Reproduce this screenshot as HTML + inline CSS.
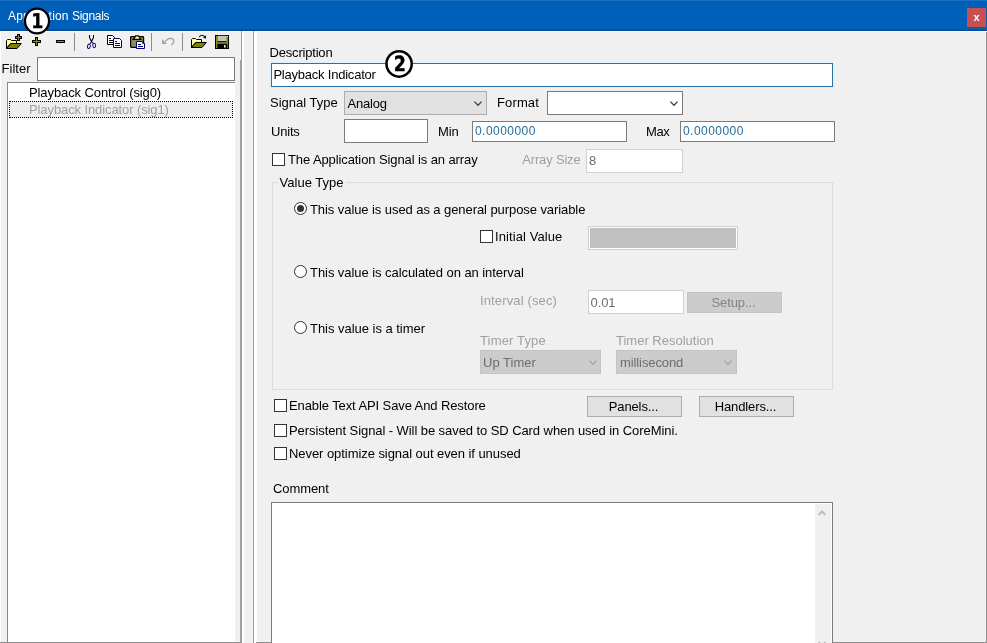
<!DOCTYPE html>
<html>
<head>
<meta charset="utf-8">
<title>Application Signals</title>
<style>
*{box-sizing:border-box;margin:0;padding:0}
html,body{width:987px;height:643px;overflow:hidden;background:#f0f0f0}
body{position:relative;will-change:transform;font-family:"Liberation Sans",sans-serif;font-size:13px;color:#000;line-height:16px}
.a{position:absolute;white-space:nowrap}
.t{position:absolute;white-space:nowrap;height:18px;line-height:18px;letter-spacing:-0.1px}
.g{color:#a0a0a0}
.inp{position:absolute;background:#fff;border:1px solid #7a7a7a}
.cb{position:absolute;width:13px;height:13px;background:#fff;border:1px solid #333}
.rd{position:absolute;width:13px;height:13px;border-radius:50%;background:#fff;border:1.3px solid #333}
.btn{position:absolute;background:#e1e1e1;border:1px solid #adadad;text-align:center;line-height:20px;height:20px;letter-spacing:-0.12px;padding-right:2px}
.sep{position:absolute;width:1px;background:#8c8c8c;top:33px;height:18px}
svg{position:absolute;overflow:visible}
</style>
</head>
<body>
<!-- title bar -->
<div class="a" id="titlebar" style="left:0;top:0;width:987px;height:31px;background:#005fb8;border-top:1px solid #1a6fc0;border-bottom:1px solid #004a91;box-shadow:inset 0 -1px 0 #0056a8"></div>
<div class="a" style="left:0;top:31px;width:987px;height:1px;background:#f4ffff"></div>
<div class="a" id="title" style="left:8px;top:8px;color:#fff;font-size:12px;line-height:16px"><span style="letter-spacing:0.18px">Application</span> <span style="letter-spacing:-0.3px">Signals</span></div>
<div class="a" id="close" style="left:967px;top:8px;width:19px;height:19px;background:#c75050;color:#fff;font-weight:bold;font-size:11px;line-height:18px;text-align:center">x</div>

<!-- panel edges -->
<div class="a" style="left:0;top:32px;width:1px;height:611px;background:#fff"></div>
<div class="a" style="left:240px;top:60px;width:1px;height:583px;background:#a0a0a0"></div>
<div class="a" style="left:241px;top:31px;width:1px;height:612px;background:#a0a0a0"></div>
<div class="a" style="left:242px;top:32px;width:2px;height:611px;background:#fff"></div>
<div class="a" style="left:253px;top:31px;width:1px;height:612px;background:#a0a0a0"></div>
<div class="a" style="left:254px;top:32px;width:3px;height:611px;background:#fff"></div>
<div class="a" style="left:986px;top:32px;width:1px;height:611px;background:#909090"></div>
<div class="a" style="left:0;top:642px;width:242px;height:1px;background:#909090"></div>
<div class="a" style="left:256px;top:642px;width:731px;height:1px;background:#909090"></div>

<!-- toolbar -->

<!-- new-folder icon -->
<svg style="left:6px;top:34px" width="17" height="16" viewBox="0 0 17 16">
 <path d="M0.5 14.5 L0.5 6.5 L1.5 5.5 L4.5 5.5 L5.5 6.5 L10.5 6.5 L10.5 9.5 L4.5 9.5 Z" fill="#ffff99" stroke="#000" stroke-width="1"/>
 <path d="M0.5 14.5 L4.7 9.5 L15.3 9.5 L11 14.5 Z" fill="#808000" stroke="#000" stroke-width="1"/>
 <path d="M11 0 h3 v2 h2 v3 h-2 v2 h-3 v-2 h-2 v-3 h2 z" fill="#000"/>
 <path d="M12 1 h1 v2 h2 v1 h-2 v2 h-1 v-2 h-2 v-1 h2 z" fill="#8a7a20"/>
</svg>
<!-- plus -->
<svg style="left:32px;top:37px" width="9" height="9" viewBox="0 0 9 9">
 <path d="M3 0 h3 v3 h3 v3 h-3 v3 h-3 v-3 h-3 v-3 h3 z" fill="#000"/>
 <path d="M4 1 h1 v3 h3 v1 h-3 v3 h-1 v-3 h-3 v-1 h3 z" fill="#8c8c2a"/>
</svg>
<!-- minus -->
<svg style="left:56px;top:40px" width="9" height="3" viewBox="0 0 9 3">
 <rect x="0" y="0" width="9" height="3" fill="#000"/>
 <rect x="1" y="1" width="7" height="1" fill="#8c8c4a"/>
</svg>
<!-- cut -->
<svg style="left:87px;top:35px" width="10" height="14" viewBox="0 0 10 14">
 <path d="M2.5 0 L2.5 2.6 L4.5 6.6 L6.5 2.6 L6.5 0" fill="none" stroke="#000" stroke-width="1.05"/>
 <path d="M4.5 6.6 L2.9 9 M4.5 6.6 L6.2 8.4" fill="none" stroke="#101060" stroke-width="1.05"/>
 <ellipse cx="1.9" cy="11.3" rx="1.35" ry="2.25" transform="rotate(14 1.9 11.3)" fill="#fbfbfb" stroke="#000070" stroke-width="1"/>
 <ellipse cx="7.2" cy="10.5" rx="1.45" ry="2.15" transform="rotate(-10 7.2 10.5)" fill="#fbfbfb" stroke="#000070" stroke-width="1"/>
</svg>
<!-- copy -->
<svg style="left:107px;top:35px" width="16" height="14" viewBox="0 0 16 14">
 <path d="M0.5 0.5 L5.5 0.5 L7.5 2.5 L7.5 9.5 L0.5 9.5 Z" fill="#fff" stroke="#000" stroke-width="1"/>
 <path d="M2 3.5 H4 M2 5.5 H6 M2 7.5 H6" stroke="#000" stroke-width="1"/>
 <path d="M6.5 3.5 L12.5 3.5 L14.5 5.5 L14.5 12.5 L6.5 12.5 Z" fill="#fff" stroke="#000080" stroke-width="1"/>
 <path d="M8 6.5 H10 M8 8.5 H13 M8 10.5 H13" stroke="#000080" stroke-width="1"/>
</svg>
<!-- paste -->
<svg style="left:130px;top:35px" width="16" height="14" viewBox="0 0 16 14">
 <rect x="0.6" y="1.6" width="13" height="10.8" rx="0.8" fill="#8c8c58" stroke="#000" stroke-width="1.2"/>
 <path d="M3.2 4.4 L4.6 2.9 L5.5 0.9 L8.7 0.9 L9.6 2.9 L11 4.4 Z" fill="#ffffc8" stroke="#000" stroke-width="1.1"/>
 <path d="M6.5 6.5 L12.5 6.5 L14.5 8.5 L14.5 13.5 L6.5 13.5 Z" fill="#fff" stroke="#000080" stroke-width="1"/>
 <path d="M12.5 6.5 L12.5 8.5 L14.5 8.5" fill="none" stroke="#000080" stroke-width="0.8"/>
 <path d="M8 9.5 H11 M8 11.5 H13" stroke="#000080" stroke-width="1"/>
</svg>
<!-- undo (disabled) -->
<svg style="left:162px;top:37px" width="13" height="9" viewBox="0 0 13 9">
 <path d="M0 2 L0 7 L5 7 Z" fill="#a6a6a6"/>
 <path d="M3 4.5 L6.5 1.6 L9.5 1.3 Q12.3 2.2 11.6 5 Q11.2 7 9.3 8" fill="none" stroke="#a6a6a6" stroke-width="1.4"/>
</svg>
<!-- open -->
<svg style="left:191px;top:34px" width="17" height="16" viewBox="0 0 17 16">
 <path d="M0.5 13.5 L0.5 5.5 L1.5 4.5 L4.5 4.5 L5.5 5.5 L10.5 5.5 L10.5 8.5 L4.5 8.5 Z" fill="#ffff99" stroke="#000" stroke-width="1"/>
 <path d="M0.5 13.5 L4.7 8.5 L15.3 8.5 L11 13.5 Z" fill="#808000" stroke="#000" stroke-width="1"/>
 <path d="M8.3 2.8 Q10.8 -0.3 13.6 2.6" fill="none" stroke="#000" stroke-width="1.1"/>
 <path d="M12 3 L15.2 1.4 L14.6 5 Z" fill="#000"/>
</svg>
<!-- save -->
<svg style="left:215px;top:35px" width="14" height="14" viewBox="0 0 14 14">
 <rect x="0" y="0" width="14" height="14" fill="#000"/>
 <rect x="1" y="1" width="12" height="12" fill="#8a8a20"/>
 <rect x="3" y="0.8" width="8.3" height="5.4" fill="#c4c4c4"/>
 <rect x="2.6" y="6.2" width="8.8" height="0.9" fill="#000"/>
 <rect x="2.3" y="8.8" width="9.9" height="4.6" fill="#000"/>
 <rect x="9" y="10" width="1.6" height="2.6" fill="#e8e8d0"/>
 <rect x="12" y="1" width="1" height="1" fill="#f0f0f0"/>
</svg>

<div class="sep" style="left:74px"></div>
<div class="sep" style="left:151px"></div>
<div class="sep" style="left:182px"></div>

<!-- filter -->
<div class="t" style="left:1.5px;top:60px;letter-spacing:0.05px">Filter</div>
<div class="inp" style="left:37px;top:57px;width:198px;height:24px"></div>

<!-- tree -->
<div class="a" id="tree" style="left:7px;top:82px;width:228px;height:560px;background:#fff;border-left:1px solid #828790;border-top:1px solid #828790"></div>
<div class="t" style="left:29px;top:84px">Playback Control (sig0)</div>
<div class="a" style="left:9px;top:101px;width:224px;height:17px;background:#eeeeee;border:1px dotted #000"></div>
<div class="t g" style="left:29px;top:101px">Playback Indicator (sig1)</div>

<!-- right panel -->
<div class="t" style="left:269.6px;top:44px;letter-spacing:-0.2px">Description</div>
<div class="inp" style="left:271px;top:63px;width:562px;height:24px;border-color:#2a72aa;box-shadow:0 0 0 1px #d9f1fa"></div>
<div class="t" style="left:273.4px;top:66px;letter-spacing:-0.22px">Playback Indicator</div>

<div class="t" style="left:270px;top:94px;letter-spacing:0">Signal Type</div>
<div class="a" style="left:344px;top:91px;width:143px;height:24px;background:#e1e1e1;border:1px solid #adadad"></div>
<div class="t" style="left:347.6px;top:95px;letter-spacing:-0.23px">Analog</div>
<svg style="left:473px;top:100px" width="10" height="7" viewBox="0 0 10 7"><path d="M1.4 1.6 L5 5.3 L8.6 1.6" fill="none" stroke="#404040" stroke-width="1.25"/></svg>
<div class="t" style="left:497px;top:94px;letter-spacing:0.13px">Format</div>
<div class="inp" style="left:547px;top:91px;width:136px;height:24px"></div>
<svg style="left:668.5px;top:100px" width="10" height="7" viewBox="0 0 10 7"><path d="M1.4 1.6 L5 5.3 L8.6 1.6" fill="none" stroke="#404040" stroke-width="1.25"/></svg>

<div class="t" style="left:271px;top:123px;letter-spacing:-0.2px">Units</div>
<div class="inp" style="left:344px;top:119px;width:84px;height:24px"></div>
<div class="t" style="left:438px;top:123px">Min</div>
<div class="inp" style="left:472px;top:121px;width:155px;height:21px"></div>
<div class="t" style="left:475px;top:122px;color:#256b9f;font-size:12px;letter-spacing:0.45px">0.0000000</div>
<div class="t" style="left:646px;top:123px;letter-spacing:-0.4px">Max</div>
<div class="inp" style="left:680px;top:121px;width:155px;height:21px"></div>
<div class="t" style="left:683px;top:122px;color:#256b9f;font-size:12px;letter-spacing:0.45px">0.0000000</div>

<div class="cb" style="left:272px;top:153px"></div>
<div class="t" style="left:288px;top:151px">The Application Signal is an array</div>
<div class="t g" style="left:522.3px;top:151px;letter-spacing:-0.18px">Array Size</div>
<div class="inp" style="left:586px;top:149px;width:97px;height:24px;border-color:#d0d0d0"></div>
<div class="t" style="left:589px;top:152px;color:#6d6d6d">8</div>

<!-- group -->
<div class="a" style="left:272px;top:182px;width:561px;height:208px;border:1px solid #dcdcdc"></div>
<div class="t" style="left:277px;top:174px;background:#f0f0f0;padding:0 2px;letter-spacing:0.02px;margin-left:0.5px">Value Type</div>

<div class="rd" style="left:294px;top:202px"></div>
<div class="a" style="left:297px;top:205px;width:7px;height:7px;border-radius:50%;background:#333"></div>
<div class="t" style="left:310px;top:201px;letter-spacing:-0.075px">This value is used as a general purpose variable</div>

<div class="cb" style="left:480px;top:230px"></div>
<div class="t" style="left:495px;top:228px;letter-spacing:0.085px">Initial Value</div>
<div class="a" style="left:588px;top:226px;width:150px;height:24px;background:#c0c0c0;border:1px solid #cfcfcf;box-shadow:inset 0 0 0 1px #fff"></div>

<div class="rd" style="left:294px;top:265px"></div>
<div class="t" style="left:310px;top:264px;letter-spacing:-0.06px">This value is calculated on an interval</div>

<div class="t g" style="left:480px;top:292px;letter-spacing:0.14px">Interval (sec)</div>
<div class="inp" style="left:588px;top:290px;width:96px;height:24px;border-color:#d0d0d0"></div>
<div class="t" style="left:590.5px;top:294px;color:#6d6d6d">0.01</div>
<div class="btn" style="left:687px;top:292px;width:95px;height:21px;background:#cccccc;border-color:#c4c4c4;color:#838383;line-height:20px">Setup...</div>

<div class="rd" style="left:294px;top:321px"></div>
<div class="t" style="left:310px;top:320px;letter-spacing:-0.03px">This value is a timer</div>

<div class="t g" style="left:480px;top:332px;letter-spacing:0.16px">Timer Type</div>
<div class="a" style="left:480px;top:350px;width:121px;height:24px;background:#cccccc;border:1px solid #c4c4c4"></div>
<div class="t" style="left:483px;top:354px;color:#6d6d6d;letter-spacing:0.03px">Up Timer</div>
<svg style="left:587.5px;top:359px" width="10" height="7" viewBox="0 0 10 7"><path d="M1.4 1.6 L5 5.3 L8.6 1.6" fill="none" stroke="#a3a3a3" stroke-width="1.2"/></svg>
<div class="t g" style="left:616px;top:332px;letter-spacing:0px">Timer Resolution</div>
<div class="a" style="left:616px;top:350px;width:121px;height:24px;background:#cccccc;border:1px solid #c4c4c4"></div>
<div class="t" style="left:620px;top:354px;color:#6d6d6d">millisecond</div>
<svg style="left:723px;top:359px" width="10" height="7" viewBox="0 0 10 7"><path d="M1.4 1.6 L5 5.3 L8.6 1.6" fill="none" stroke="#a3a3a3" stroke-width="1.2"/></svg>

<div class="cb" style="left:274px;top:399px"></div>
<div class="t" style="left:289px;top:397px">Enable Text API Save And Restore</div>
<div class="btn" style="left:587px;top:396px;width:95px;height:21px">Panels...</div>
<div class="btn" style="left:699px;top:396px;width:95px;height:21px">Handlers...</div>

<div class="cb" style="left:274px;top:424px"></div>
<div class="t" style="left:289px;top:422px;letter-spacing:-0.075px">Persistent Signal - Will be saved to SD Card when used in CoreMini.</div>
<div class="cb" style="left:274px;top:447px"></div>
<div class="t" style="left:289px;top:445px;letter-spacing:-0.06px">Never optimize signal out even if unused</div>

<div class="t" style="left:273px;top:480px">Comment</div>
<div class="inp" style="left:271px;top:502px;width:562px;height:160px"></div>
<div class="a" style="left:815px;top:504px;width:16px;height:139px;background:#f0f0f0"></div>
<svg style="left:818.4px;top:510px" width="8" height="6" viewBox="0 0 8 6"><path d="M0.7 4.9 L4 1.5 L7.3 4.9" fill="none" stroke="#bababa" stroke-width="2"/></svg>
<svg style="left:818.4px;top:640.6px" width="8" height="6" viewBox="0 0 8 6"><path d="M0.7 1.1 L4 4.5 L7.3 1.1" fill="none" stroke="#bababa" stroke-width="2"/></svg>

<!-- badges -->
<svg id="b1" style="left:20px;top:4px" width="34" height="34" viewBox="0 0 34 34"><ellipse cx="17" cy="17" rx="12.05" ry="12.4" fill="#fff" stroke="#000" stroke-width="2.3"/><text x="0" y="0" transform="translate(17.3 23.7) scale(.86 1)" text-anchor="middle" font-family="'DejaVu Sans',sans-serif" font-weight="bold" font-size="20.2" text-rendering="geometricPrecision" fill="#000" stroke="#000" stroke-width="0.35">1</text></svg>
<svg id="b2" style="left:382px;top:47px" width="34" height="34" viewBox="0 0 34 34"><ellipse cx="17.1" cy="16.9" rx="12.6" ry="12.75" fill="#fff" stroke="#000" stroke-width="2.5"/><text x="0" y="0" transform="translate(17.9 24.1) scale(.84 1)" text-anchor="middle" font-family="'DejaVu Sans',sans-serif" font-weight="bold" font-size="20.8" text-rendering="geometricPrecision" fill="#000" stroke="#000" stroke-width="0.45">2</text></svg>
</body>
</html>
